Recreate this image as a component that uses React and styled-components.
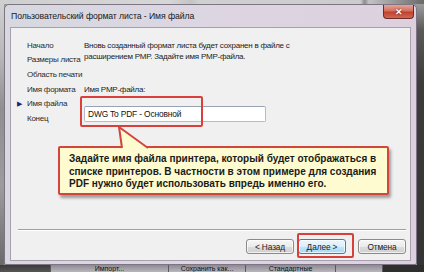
import React from "react";
import styled, { createGlobalStyle } from "styled-components";

const Global = createGlobalStyle`
  html, body { margin: 0; padding: 0; }
  body { width: 424px; height: 272px; overflow: hidden; font-family: "Liberation Sans", Arial, sans-serif; }
`;

const Desktop = styled.div`
  width: 424px;
  height: 272px;
  display: grid;
  grid-template-columns: 4px 413px 7px;
  grid-template-rows: 4px 261px 7px;
  background: #9a9a9a;
  overflow: hidden;
`;

const TopStrip = styled.div`
  grid-column: 1 / 4;
  background: linear-gradient(90deg, #cfcfcf 0%, #d6d6d6 40%, #c4c4c4 45%, #d0d0d0 47%, #cbcbcb 85%, #8d8d8d 86%, #c2c2c2 87%, #6a6a6a 100%);
`;

const SideStrip = styled.div`
  background: ${(p) => p.$dark ? "linear-gradient(180deg,#9c9c9c 0%,#5a5a5a 10%,#3c3c3c 30%,#343434 100%)" : "linear-gradient(180deg,#cfcfcf 0%,#b8b8b8 20%,#8f8f8f 40%,#9c9c9c 70%,#6a6a6a 100%)"};
`;

const BottomStrip = styled.div`
  grid-column: 1 / 4;
  display: flex;
  background: #3e3e3e;
  overflow: hidden;
`;

const TaskCell = styled.div`
  width: ${(p) => p.$w}px;
  flex: none;
  background: ${(p) => p.$bg || "linear-gradient(180deg,#8e8a92,#b9b6bc)"};
  border-right: 1px solid #5a5a5a;
  font-size: 7px;
  line-height: 7px;
  color: #111;
  text-align: center;
  white-space: nowrap;
  overflow: hidden;
`;

const Window = styled.div`
  position: relative;
  display: flex;
  flex-direction: column;
  background: linear-gradient(90deg, #d7d8e0 0%, #dcd6e2 50%, #ddd0de 100%);
  border: 1px solid #7d7484;
  border-radius: 5px 5px 2px 2px;
  box-sizing: border-box;
  padding: 0 5px 3px 5px;
`;

const TitleBar = styled.div`
  height: 22px;
  display: flex;
  align-items: center;
  justify-content: space-between;
`;

const Title = styled.span`
  font-size: 8.7px;
  letter-spacing: -0.1px;
  color: #1a1a1a;
  padding-left: 1px;
  margin-top: -1px;
`;

const CloseBtn = styled.div`
  width: 31px;
  height: 14px;
  margin-top: -8px;
  margin-right: -3px;
  border: 1px solid #6b2b2b;
  border-top: none;
  border-radius: 0 0 4px 4px;
  box-sizing: border-box;
  background: linear-gradient(180deg, #e6a497 0%, #d2705f 45%, #c2402f 55%, #cf6a52 100%);
  display: flex;
  align-items: center;
  justify-content: center;
  color: #fff;
  font-size: 9px;
  font-weight: bold;
  text-shadow: 0 0 2px #600;
`;

const Client = styled.div`
  position: relative;
  flex: 1;
  background: #f0f0f0;
  border: 1px solid #a89fae;
  display: flex;
  flex-direction: column;
  color: #222;
  font-size: 8px;
  letter-spacing: -0.25px;
`;

const Body = styled.div`
  flex: 1;
  display: grid;
  grid-template-columns: 73px 1fr;
  padding-top: 10px;
`;

const Nav = styled.ul`
  list-style: none;
  margin: 0;
  padding: 0 0 0 6px;
`;

const NavItem = styled.li`
  display: flex;
  align-items: center;
  height: 14.6px;
  color: #2a2a2a;
  white-space: nowrap;
`;

const Marker = styled.span`
  width: 10px;
  flex: none;
  color: #1b237a;
  font-size: 7px;
`;

const Content = styled.div`
  padding-top: 2px;
`;

const Para = styled.p`
  margin: 0;
  line-height: 11px;
`;

const FieldLabel = styled.div`
  margin-top: 22px;
  line-height: 11px;
`;

const TextInput = styled.div`
  margin-top: 11px;
  width: 182px;
  height: 16px;
  box-sizing: border-box;
  background: #fff;
  border: 1px solid #b5bcc7;
  border-top-color: #9aa3b1;
  border-radius: 2px;
  padding-left: 3px;
  display: flex;
  align-items: center;
  color: #111;
  font-size: 8.4px;
  letter-spacing: -0.15px;
`;

const Footer = styled.div`
  display: flex;
  flex-direction: column;
`;

const Separator = styled.div`
  margin: 0 4px 0 7px;
  height: 0;
  border-top: 1px solid #a0a0a0;
  border-bottom: 1px solid #fff;
`;

const ButtonRow = styled.div`
  display: flex;
  justify-content: flex-end;
  gap: 4px;
  padding: 8px 4px 6px 0;
`;

const Button = styled.div`
  width: 48px;
  height: 15px;
  margin-left: ${(p) => p.$gapLeft || 0}px;
  box-sizing: border-box;
  border: 1px solid ${(p) => (p.$default ? "#3c7fb1" : "#8a8a8a")};
  border-radius: 3px;
  background: ${(p) =>
    p.$default
      ? "linear-gradient(180deg,#eaf6fd 0%,#d9f0fc 50%,#bee6fd 51%,#a7d9f5 100%)"
      : "linear-gradient(180deg,#f6f6f6 0%,#ebebeb 50%,#dddddd 51%,#cfcfcf 100%)"};
  box-shadow: inset 0 0 0 1px rgba(255,255,255,0.7);
  display: flex;
  align-items: center;
  justify-content: center;
  font-size: 8.3px;
  letter-spacing: -0.1px;
  color: #222;
`;

const RedFrame = styled.div`
  position: absolute;
  left: ${(p) => p.$x}px;
  top: ${(p) => p.$y}px;
  width: ${(p) => p.$w}px;
  height: ${(p) => p.$h}px;
  box-sizing: border-box;
  border: 2px solid #d9403c;
  border-radius: 2px;
  pointer-events: none;
`;

const Callout = styled.div`
  position: absolute;
  left: 47px;
  top: 118px;
  width: 331px;
  height: 49px;
  box-sizing: border-box;
  background: #fdfbcf;
  border: 2px solid #d2463e;
  border-radius: 2px;
  box-shadow: 2px 3px 3px rgba(0,0,0,0.35);
  padding: 5px 0 0 9px;
  font-weight: bold;
  font-size: 10px;
  letter-spacing: 0;
  line-height: 12.5px;
  color: #1a1a1a;
`;

const Pointer = styled.svg`
  position: absolute;
  left: 106px;
  top: 99px;
  overflow: visible;
`;

const navItems = [
  "Начало",
  "Размеры листа",
  "Область печати",
  "Имя формата",
  "Имя файла",
  "Конец",
];

export default function App() {
  return (
    <>
      <Global />
      <Desktop>
        <TopStrip />
        <SideStrip />
        <Window>
          <TitleBar>
            <Title>Пользовательский формат листа - Имя файла</Title>
            <CloseBtn>✕</CloseBtn>
          </TitleBar>
          <Client>
            <Body>
              <Nav>
                {navItems.map((n) => (
                  <NavItem key={n}>
                    <Marker>{n === "Имя файла" ? "▶" : ""}</Marker>
                    {n}
                  </NavItem>
                ))}
              </Nav>
              <Content>
                <Para>
                  Вновь созданный формат листа будет сохранен в файле с
                  <br />
                  расширением PMP. Задайте имя PMP-файла.
                </Para>
                <FieldLabel>Имя PMP-файла:</FieldLabel>
                <TextInput>DWG To PDF - Основной</TextInput>
              </Content>
            </Body>
            <Footer>
              <Separator />
              <ButtonRow>
                <Button>&lt; Назад</Button>
                <Button $default>Далее &gt;</Button>
                <Button $gapLeft={8}>Отмена</Button>
              </ButtonRow>
            </Footer>
            <RedFrame $x={69} $y={68} $w={123} $h={31} />
            <RedFrame $x={286} $y={205} $w={57} $h={25} />
            <Callout>
              Задайте имя файла принтера, который будет отображаться в
              <br />
              списке принтеров. В частности в этом примере для создания
              <br />
              PDF нужно будет использовать впредь именно его.
            </Callout>
            <Pointer width="34" height="22" viewBox="0 0 34 22">
              <polygon points="2,0 5,21 31,21" fill="#fdfbcf" />
              <polyline points="5,21 2,0 31,21" fill="none" stroke="#d2463e" strokeWidth="2" strokeLinejoin="round" />
            </Pointer>
          </Client>
        </Window>
        <SideStrip $dark />
        <BottomStrip>
          <TaskCell $w={50} $bg="linear-gradient(180deg,#3a3a3a,#555)" />
          <TaskCell $w={117}>Импорт...</TaskCell>
          <TaskCell $w={76}>Сохранить как...</TaskCell>
          <TaskCell $w={89}>Стандартные</TaskCell>
          <TaskCell $w={46} />
          <TaskCell $w={60} $bg="#2e2e2e" />
        </BottomStrip>
      </Desktop>
    </>
  );
}
